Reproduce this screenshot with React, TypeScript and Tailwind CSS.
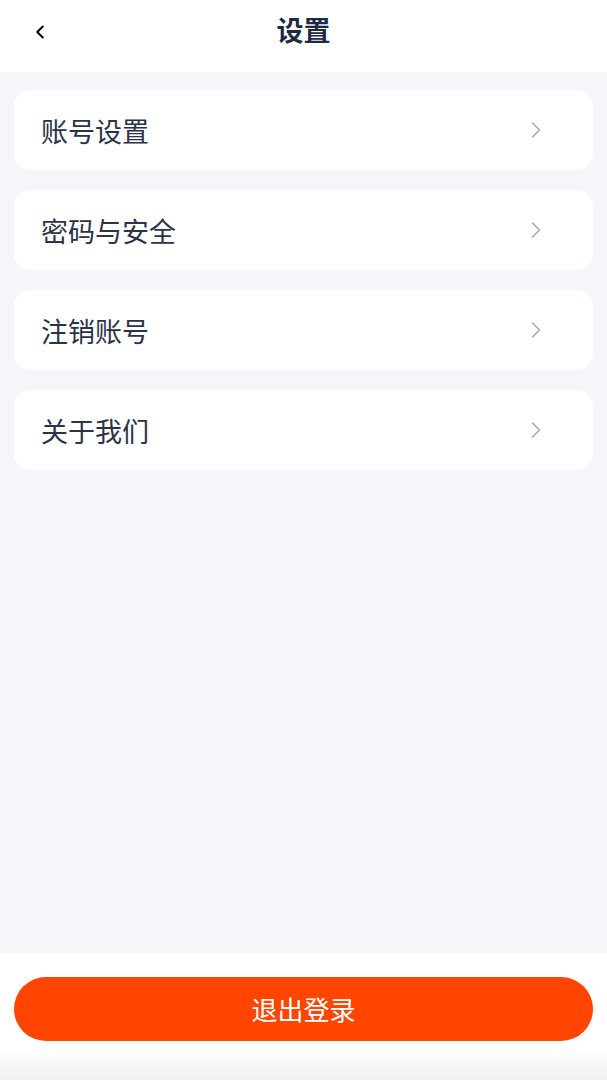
import { ChevronLeft, ChevronRight } from 'lucide-react'

const items = ['账号设置', '密码与安全', '注销账号', '关于我们']

const font = { fontFamily: '"Noto Sans CJK SC", "Noto Sans", sans-serif' }

export default function App() {
  return (
    <div
      className="w-[607px] h-[1080px] flex flex-col bg-[#f5f6fa] overflow-hidden"
      style={font}
    >
      {/* HEADER */}
      <div className="h-[72px] shrink-0 bg-white flex items-center relative">
        <ChevronLeft className="absolute left-[29px] top-[21px] w-[22px] h-[22px] text-black" strokeWidth={2.2} />
        <h1 className="flex-1 text-center text-[27px] font-bold text-[#1e2a44] leading-none -mt-[14px]">
          设置
        </h1>
      </div>

      {/* LIST */}
      <div className="flex-1 flex flex-col gap-[20px] px-[14px] pt-[18px]">
        {items.map((item) => (
          <div
            key={item}
            className="h-[80px] bg-white rounded-[16px] flex items-center justify-between pl-[27px] pr-[43px]"
          >
            <span className="text-[27px] text-[#2a3348] leading-none">{item}</span>
            <ChevronRight className="w-[28px] h-[28px] text-[#a8abb2]" strokeWidth={1.4} />
          </div>
        ))}
      </div>

      {/* LOGOUT */}
      <div className="h-[127px] shrink-0 bg-gradient-to-b from-white from-75% to-[#f0f0f0] px-[14px] pt-[24px]">
        <button className="w-full h-[64px] rounded-full bg-[#ff4500] text-white text-[26px] leading-none">
          退出登录
        </button>
      </div>
    </div>
  )
}
